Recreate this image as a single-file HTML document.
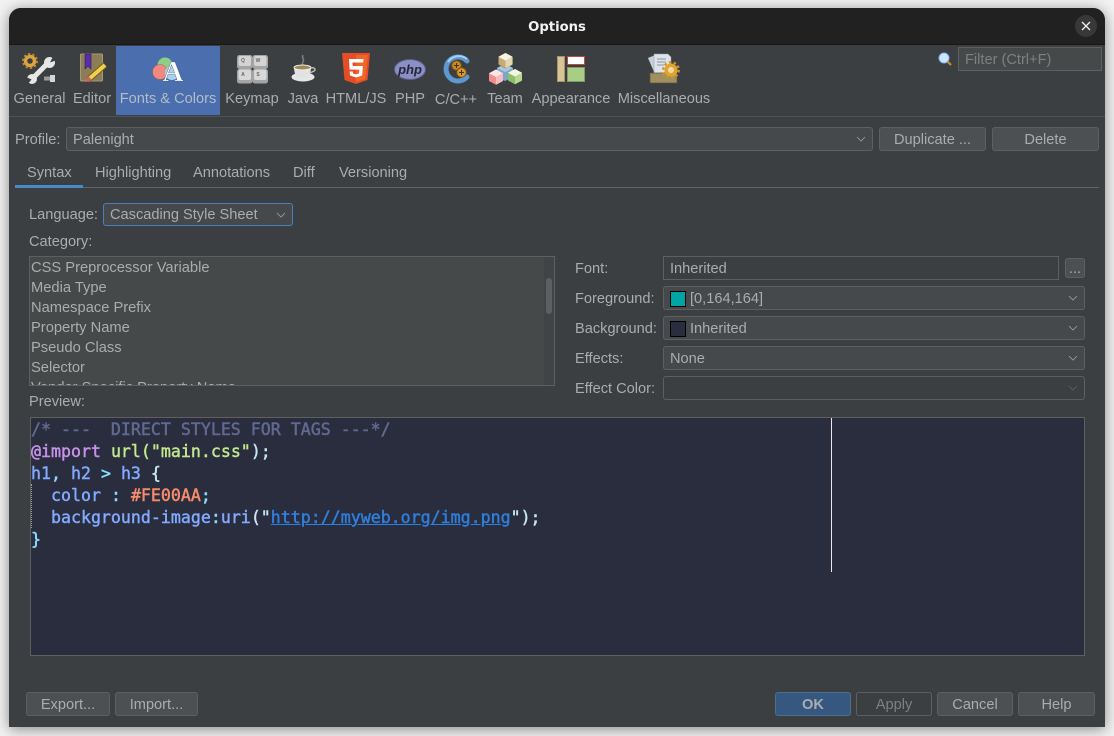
<!DOCTYPE html>
<html><head><meta charset="utf-8"><title>Options</title>
<style>
html,body{margin:0;padding:0;width:1114px;height:736px;overflow:hidden;background:#f2f2f2}
body{font-family:"Liberation Sans",sans-serif;font-size:14.6px;color:#a9adaf;position:relative}
#win{position:absolute;left:9px;top:8px;width:1096px;height:719px;background:#3c3f41;border-radius:12px 12px 0 0;box-shadow:0 2px 14px rgba(0,0,0,.45);overflow:hidden}
#bar{position:absolute;left:9px;top:8px;width:1096px;height:37px;background:#212121;border-radius:12px 12px 0 0;border-bottom:1px solid #171717;box-sizing:border-box}
.a{position:absolute;box-sizing:border-box}
.t{position:absolute;white-space:nowrap;line-height:20px;margin-top:1px}
.c{transform:translateX(-50%)}
.b{position:absolute;box-sizing:border-box;background:#4c5052;border:1px solid #5e6060;border-radius:3px;height:24px;line-height:24px;text-align:center;white-space:nowrap}
.cb{position:absolute;box-sizing:border-box;background:#46494b;border:1px solid #5e6060;border-radius:3px;height:24px;line-height:24px;padding-left:6px;white-space:nowrap}
.cb svg{position:absolute;right:5px;top:6px}
.sw{position:absolute;left:6px;top:4px;width:16px;height:16px;box-sizing:border-box;border:1px solid #000}
#code{position:absolute;left:31px;top:419px;font-family:"DejaVu Sans Mono",monospace;font-size:16.6px;line-height:22px;white-space:pre;color:#82aaff;-webkit-text-stroke:.45px currentColor}
</style></head><body>
<div id="win"></div>
<div id="bar"></div>
<div class="t c" style="left:557px;top:17px;color:#f2f2f2;font:bold 13.2px/20px 'DejaVu Sans',sans-serif">Options</div>
<div class="a" style="left:1075px;top:15px;width:22px;height:22px;border-radius:50%;background:#383838"></div>
<svg class="a" style="left:1081px;top:21px" width="10" height="10"><path d="M1 1L9 9M9 1L1 9" stroke="#f0f0f0" stroke-width="1.300"/></svg>

<div class="a" style="left:116px;top:46px;width:104px;height:69px;background:#4b6eaf"></div>
<div class="a" style="left:9px;top:116px;width:1096px;height:1px;background:#505356"></div>

<svg class="a" style="left:0;top:0" width="1114" height="120">
<!-- general -->
<circle cx="30" cy="61" r="4.500" fill="none" stroke="#d9a441" stroke-width="3.500"/>
<circle cx="30" cy="61" r="7" fill="none" stroke="#c08a2c" stroke-width="2" stroke-dasharray="2.200 2.200"/>
<path d="M33 78L48 63" stroke="#e6e6e6" stroke-width="5"/>
<circle cx="49.500" cy="62.500" r="5.500" fill="#e6e6e6"/>
<path d="M50 62.500L53 56.500L57 60z" fill="#3c3f41"/>
<circle cx="32" cy="79" r="5" fill="#e6e6e6"/>
<path d="M31.500 79.500L27 85L26 77z" fill="#3c3f41"/>
<rect x="44" y="76.500" width="6" height="4" fill="#9a9a9a"/><rect x="50" y="75" width="5" height="7" fill="#d5d5d5"/>
<!-- editor -->
<rect x="80.500" y="54" width="22" height="27" rx="1" fill="#8a7d58" stroke="#a89a70"/>
<path d="M85 54h6v15l-3-3-3 3z" fill="#5a2ea8" stroke="#2e1a66" stroke-width=".6"/>
<path d="M89 79L105 65" stroke="#7d5a12" stroke-width="6"/><path d="M89 79L105 65" stroke="#f0d050" stroke-width="4"/>
<path d="M86 82l1.500-4 3 3z" fill="#e06a70"/><path d="M87 81l3-3" stroke="#d65a60" stroke-width="3.500"/>
<!-- fonts -->
<circle cx="165" cy="65" r="7.500" fill="#8fce86"/>
<circle cx="160" cy="72" r="7.500" fill="#f08a80" stroke="#b05a55" stroke-width=".5"/>
<circle cx="172" cy="73" r="7" fill="#a6d2ee"/>
<text x="173" y="81" text-anchor="middle" font-family="Liberation Serif" font-weight="bold" font-size="29" fill="#fff" stroke="#3a4a66" stroke-width=".35">A</text>
<!-- keymap -->
<g font-family="Liberation Sans" font-size="5" font-weight="bold" fill="#666" text-anchor="middle">
<rect x="237" y="55" width="15.500" height="14" rx="2.500" fill="#a4a4a4"/><rect x="238.500" y="56" width="12.500" height="10" rx="2" fill="#d4d4d4"/><text x="243" y="62">Q</text>
<rect x="252.500" y="55" width="15.500" height="14" rx="2.500" fill="#a4a4a4"/><rect x="254" y="56" width="12.500" height="10" rx="2" fill="#d4d4d4"/><text x="258" y="62">W</text>
<rect x="237" y="69" width="15.500" height="14.500" rx="2.500" fill="#a4a4a4"/><rect x="238.500" y="69.500" width="12.500" height="10.500" rx="2" fill="#d8d8d8"/><text x="243" y="76">A</text>
<rect x="252.500" y="69" width="15.500" height="14.500" rx="2.500" fill="#a4a4a4"/><rect x="254" y="69.500" width="12.500" height="10.500" rx="2" fill="#d8d8d8"/><text x="258" y="76">S</text>
</g>
<!-- java -->
<path d="M303 55c-2 3 2 4 0 7s1 3 0 4" stroke="#7f7f7f" stroke-width="1.500" fill="none"/>
<ellipse cx="303" cy="77" rx="11.500" ry="4.500" fill="#e6e6e6"/>
<path d="M294 67h17c0 6-2 11-6 11h-5c-4 0-6-5-6-11z" fill="#e2e2e2"/>
<ellipse cx="302.500" cy="67.500" rx="8.500" ry="2.500" fill="#a08a50" stroke="#efefef"/>
<path d="M311 68c4-1 5 2 3 3l-4 2" fill="none" stroke="#bdbdbd" stroke-width="1.500"/>
<!-- html5 -->
<path d="M342 53h28l-2.500 27-11.500 4-11.500-4z" fill="#e44d26"/><path d="M356 55v27l9.500-3 2.300-24z" fill="#f16529"/>
<path d="M349 59h14.500l-.3 3.500h-10.700l.3 3.500h10.100l-.8 9.500-6.100 2-6-2-.4-4h3.200l.2 2 3 .8 3-.8.3-3.900h-9.700z" fill="#fff"/>
<!-- php -->
<ellipse cx="410" cy="69.500" rx="15.500" ry="10" fill="#8a8fc4" stroke="#5a5e8c"/>
<text x="410" y="74" text-anchor="middle" font-family="Liberation Sans" font-style="italic" font-weight="bold" font-size="13" fill="#23263c">php</text>
<!-- c -->
<path d="M467 61a12 12 0 1 0 0 16" fill="none" stroke="#5f98d0" stroke-width="5" stroke-linecap="round"/>
<path d="M467 59a13 13 0 0 0-19 3" fill="none" stroke="#a9d0f0" stroke-width="2"/>
<circle cx="456.500" cy="65.500" r="4.800" fill="#c88a28" stroke="#7a5212"/><circle cx="461.500" cy="72.500" r="4.800" fill="#d89a30" stroke="#7a5212"/>
<path d="M454 65.500h5M456.500 63v5M459 72.500h5M461.500 70v5" stroke="#4a3208" stroke-width="1"/>
<!-- team -->
<path d="M505 64l8 4v9l-8 4-8-4v-9z" fill="#7ea6c8"/><path d="M505 64l8 4-8 4-8-4z" fill="#a8c8e0"/>
<path d="M505.500 53l7 3.800v7.700l-7 3.800-7-3.800v-7.700z" fill="#c6ab76" stroke="#8a7448" stroke-width=".5"/><path d="M505.500 53l7 3.800-7 3.800-7-3.800z" fill="#f8f4e6"/><path d="M505.500 60.600l7-3.800v7.700l-7 3.800z" fill="#e4d6b0"/>
<path d="M496 69.500l7 3.800v7.700l-7 3.800-7-3.800v-7.700z" fill="#f08e90"/><path d="M496 69.500l7 3.800-7 3.800-7-3.800z" fill="#fde6e6"/><path d="M496 77.100l7-3.800v7.700l-7 3.800z" fill="#f8bcbc"/>
<path d="M515 69l7 3.800v7.700l-7 3.800-7-3.800v-7.700z" fill="#8ebe68"/><path d="M515 69l7 3.800-7 3.800-7-3.800z" fill="#f0f8e4"/><path d="M515 76.600l7-3.800v7.700l-7 3.800z" fill="#b6d890"/>
<!-- appearance -->
<rect x="557.500" y="56.500" width="7" height="25" fill="#d8c496" stroke="#a89468"/>
<rect x="567.500" y="56.500" width="17" height="8" fill="#fff" stroke="#c8463c"/>
<rect x="567.500" y="67.500" width="17" height="14" fill="#a8cd84" stroke="#7f9c64"/>
<!-- misc -->
<path d="M648 58l10-4 6 17-9 3z" fill="#c8d0da" stroke="#8a929c" stroke-width=".5"/>
<path d="M654 54h14l3 3v17h-17z" fill="#dde3ea" stroke="#949ca6" stroke-width=".5"/>
<path d="M657 59h9M657 62h9M657 65h7" stroke="#8d949c"/>
<path d="M650 73h27v10h-27z" fill="#a09060" stroke="#5e5336" stroke-width=".7"/>
<circle cx="671" cy="70" r="4.800" fill="#f4dca0" stroke="#e0a430" stroke-width="3.500"/>
<circle cx="671" cy="70" r="7.800" fill="none" stroke="#d09428" stroke-width="2.200" stroke-dasharray="2.500 2.400"/>
<!-- search -->
<path d="M947 61l4 4" stroke="#d28a16" stroke-width="2.200"/>
<circle cx="944" cy="58" r="5" fill="#cfe6ff" stroke="#7db4ee"/>
</svg>

<div class="t c" style="left:39.500px;top:88px">General</div>
<div class="t c" style="left:92px;top:88px">Editor</div>
<div class="t c" style="left:168px;top:88px;color:#b4bcc6">Fonts &amp; Colors</div>
<div class="t c" style="left:252px;top:88px">Keymap</div>
<div class="t c" style="left:303px;top:88px">Java</div>
<div class="t c" style="left:356px;top:88px">HTML/JS</div>
<div class="t c" style="left:410px;top:88px">PHP</div>
<div class="t c" style="left:456px;top:89px">C/C++</div>
<div class="t c" style="left:505px;top:88px">Team</div>
<div class="t c" style="left:571px;top:88px">Appearance</div>
<div class="t c" style="left:664px;top:88px">Miscellaneous</div>

<div class="a" style="left:958px;top:47px;width:144px;height:24px;border:1px solid #5e6060;background:#45494a"></div>
<div class="t" style="left:965px;top:49px;color:#7d8082">Filter (Ctrl+F)</div>

<div class="t" style="left:15px;top:129px">Profile:</div>
<div class="cb" style="left:66px;top:127px;width:807px">Palenight<svg width="12" height="10"><path d="M2 3l4 4 4-4" fill="none" stroke="#a0a0a0" stroke-width=".8"/></svg></div>
<div class="b" style="left:879px;top:127px;width:107px">Duplicate ...</div>
<div class="b" style="left:992px;top:127px;width:107px">Delete</div>

<div class="a" style="left:15px;top:187px;width:1084px;height:1px;background:#616365"></div>
<div class="a" style="left:15px;top:185px;width:68px;height:3px;background:#4a88c7"></div>
<div class="t" style="left:27px;top:162px">Syntax</div>
<div class="t" style="left:95px;top:162px">Highlighting</div>
<div class="t" style="left:193px;top:162px">Annotations</div>
<div class="t" style="left:293px;top:162px">Diff</div>
<div class="t" style="left:339px;top:162px">Versioning</div>

<div class="t" style="left:29px;top:204px">Language:</div>
<div class="cb" style="left:103px;top:203px;width:190px;height:23px;line-height:22px;border-color:#4a7fb8;background:#45494b">Cascading Style Sheet<svg width="12" height="10"><path d="M2 3l4 4 4-4" fill="none" stroke="#a0a0a0" stroke-width=".8"/></svg></div>
<div class="t" style="left:29px;top:231px">Category:</div>

<div class="a" style="left:29px;top:256px;width:526px;height:130px;background:#45494a;border:1px solid #5e6060;overflow:hidden;font-size:14.7px">
<div class="a" style="right:0;top:0;width:10px;height:128px;background:#414446"></div>
<div class="a" style="left:516px;top:21px;width:6px;height:36px;background:#5c6062;border-radius:3px"></div>
<div class="t" style="left:1px;top:0">CSS Preprocessor Variable</div>
<div class="t" style="left:1px;top:20px">Media Type</div>
<div class="t" style="left:1px;top:40px">Namespace Prefix</div>
<div class="t" style="left:1px;top:60px">Property Name</div>
<div class="t" style="left:1px;top:80px">Pseudo Class</div>
<div class="t" style="left:1px;top:100px">Selector</div>
<div class="t" style="left:1px;top:120px">Vendor Specific Property Name</div>
</div>
<div class="t" style="left:29px;top:391px">Preview:</div>

<div class="t" style="left:575px;top:258px">Font:</div>
<div class="t" style="left:575px;top:288px">Foreground:</div>
<div class="t" style="left:575px;top:318px">Background:</div>
<div class="t" style="left:575px;top:348px">Effects:</div>
<div class="t" style="left:575px;top:378px">Effect Color:</div>

<div class="a" style="left:663px;top:256px;width:396px;height:24px;border:1px solid #5e6060;background:#3c3f41;padding-left:6px;line-height:24px">Inherited</div>
<div class="b" style="left:1065px;top:258px;width:20px;height:20px;line-height:20px">...</div>
<div class="cb" style="left:663px;top:286px;width:422px"><span class="sw" style="background:#00a4a4"></span><span style="margin-left:20px">[0,164,164]</span><svg width="12" height="10"><path d="M2 3l4 4 4-4" fill="none" stroke="#a0a0a0" stroke-width=".8"/></svg></div>
<div class="cb" style="left:663px;top:316px;width:422px"><span class="sw" style="background:#292d3e"></span><span style="margin-left:20px">Inherited</span><svg width="12" height="10"><path d="M2 3l4 4 4-4" fill="none" stroke="#a0a0a0" stroke-width=".8"/></svg></div>
<div class="cb" style="left:663px;top:346px;width:422px">None<svg width="12" height="10"><path d="M2 3l4 4 4-4" fill="none" stroke="#a0a0a0" stroke-width=".8"/></svg></div>
<div class="cb" style="left:663px;top:376px;width:422px;background:#3c3f41"><svg width="12" height="10"><path d="M2 3l4 4 4-4" fill="none" stroke="#5e6060" stroke-width=".8"/></svg></div>

<div class="a" style="left:30px;top:417px;width:1055px;height:239px;background:#292d3e;border:1px solid #5e6060"></div>
<div class="a" style="left:831px;top:418px;width:1px;height:154px;background:#eee6ea"></div>
<div class="a" style="left:31px;top:484px;width:1px;height:44px;border-left:1px dotted #9a9a9a"></div>
<div id="code"><span style="color:#616a90">/* ---  DIRECT STYLES FOR TAGS ---*/</span>
<span style="color:#c792ea">@import</span> <span style="color:#c3e88d">url("main.css"</span><span style="color:#c3e8ee">);</span>
h1<span style="color:#89ddff">,</span> h2 <span style="color:#89ddff">&gt;</span> h3 <span style="color:#c3e8ee">{</span>
  color <span style="color:#89ddff">:</span> <span style="color:#f78c6c">#FE00AA</span><span style="color:#89ddff">;</span>
  background-image<span style="color:#89ddff">:</span>uri<span style="color:#c3e8ee">("</span><span style="color:#2f7fdc;text-decoration:underline">http://myweb.org/img.png</span><span style="color:#c3e8ee">");</span>
<span style="color:#89ddff">}</span></div>

<div class="b" style="left:26px;top:692px;width:84px">Export...</div>
<div class="b" style="left:115px;top:692px;width:83px">Import...</div>
<div class="b" style="left:775px;top:692px;width:76px;background:#365880;border-color:#4c708c;font-weight:bold">OK</div>
<div class="b" style="left:856px;top:692px;width:76px;background:#3c3f41;color:#7d8082">Apply</div>
<div class="b" style="left:937px;top:692px;width:76px">Cancel</div>
<div class="b" style="left:1018px;top:692px;width:77px">Help</div>
</body></html>
